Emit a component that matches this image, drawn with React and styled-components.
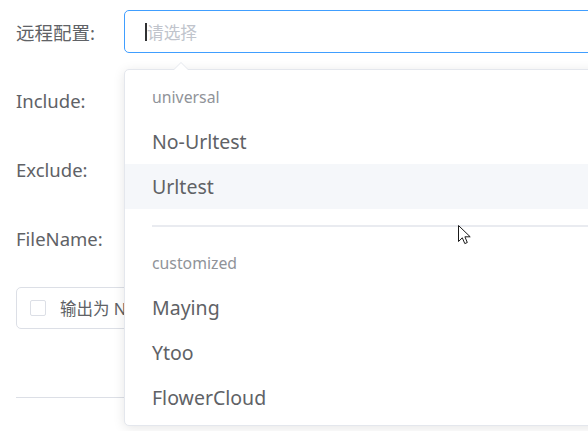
import React from "react";
import styled, { createGlobalStyle } from "styled-components";

const Global = createGlobalStyle`
  html, body { margin: 0; padding: 0; background: #fff; overflow: hidden; }
  body { width: 588px; height: 431px; font-family: "Noto Sans", "Noto Sans CJK SC", sans-serif; }
`;

const Page = styled.div`
  position: relative;
  width: 588px;
  height: 431px;
  overflow: hidden;
  padding: 10px 0 0 16px;
  box-sizing: border-box;
`;

const Row = styled.div`
  display: flex;
  align-items: center;
  height: 43px;
  margin-bottom: ${(p) => p.$gap}px;
`;

const Label = styled.div`
  width: 108px;
  flex: none;
  font-size: 18.5px;
  color: #606266;
`;

const InputBox = styled.div`
  flex: none;
  width: 600px;
  height: 43px;
  box-sizing: border-box;
  border: 1px solid ${(p) => (p.$focus ? "#409eff" : "#dcdfe6")};
  border-radius: 5px;
  display: flex;
  align-items: center;
  padding-left: 20px;
`;

const Caret = styled.span`
  width: 2px;
  height: 18px;
  background: #303133;
`;

const Placeholder = styled.span`
  font-size: 16.7px;
  color: #c0c4cc;
`;

const CheckRow = styled.div`
  display: flex;
  align-items: center;
  width: 600px;
  height: 42px;
  box-sizing: border-box;
  border: 1px solid #dcdfe6;
  border-radius: 5px;
  padding-left: 13px;
  margin-top: 27px;
`;

const Box = styled.span`
  width: 16px;
  height: 16px;
  box-sizing: border-box;
  border: 1px solid #dcdfe6;
  border-radius: 2px;
  margin-right: 14px;
`;

const CheckText = styled.span`
  font-size: 16.5px;
  color: #606266;
`;

const Divider = styled.div`
  width: 600px;
  height: 1px;
  background: #dcdfe6;
  margin-top: 68px;
`;

const Dropdown = styled.div`
  position: absolute;
  left: 124px;
  top: 69px;
  width: 600px;
  box-sizing: border-box;
  background: #fff;
  border: 1px solid #e4e7ed;
  border-radius: 5px;
  box-shadow: 0 2px 12px 0 rgba(0, 0, 0, 0.1);
  padding: 5px 0;
`;

const Arrow = styled.div`
  position: absolute;
  left: 48px;
  top: -8px;
  width: 0;
  height: 0;
  border-left: 8px solid transparent;
  border-right: 8px solid transparent;
  border-bottom: 8px solid #e4e7ed;
  &::after {
    content: "";
    position: absolute;
    left: -7px;
    top: 1px;
    border-left: 7px solid transparent;
    border-right: 7px solid transparent;
    border-bottom: 7px solid #fff;
  }
`;

const Group = styled.div`
  padding-bottom: ${(p) => (p.$last ? 0 : 18)}px;
  margin-bottom: ${(p) => (p.$last ? 0 : 14)}px;
  position: relative;
  ${(p) =>
    p.$last
      ? ""
      : `&::after {
    content: "";
    position: absolute;
    left: 27px;
    right: 0;
    bottom: 0;
    height: 2px;
    background: #e9ebf0;
  }`}
`;

const GroupTitle = styled.div`
  height: 44px;
  line-height: 44px;
  padding-left: 27px;
  font-size: 15.8px;
  color: #909399;
`;

const Item = styled.div`
  height: 45px;
  line-height: 45px;
  padding-left: 27px;
  font-size: 19.5px;
  color: #606266;
  background: ${(p) => (p.$hover ? "#f5f7fa" : "#fff")};
`;

const Pointer = styled.svg`
  position: absolute;
  left: 458px;
  top: 225px;
`;

const groups = [
  { title: "universal", items: ["No-Urltest", "Urltest"] },
  { title: "customized", items: ["Maying", "Ytoo", "FlowerCloud"] },
];

export default function App() {
  return (
    <>
      <Global />
      <Page>
        <Row $gap={26}>
          <Label>远程配置:</Label>
          <InputBox $focus>
            <Caret />
            <Placeholder>请选择</Placeholder>
          </InputBox>
        </Row>
        <Row $gap={26}>
          <Label>Include:</Label>
          <InputBox />
        </Row>
        <Row $gap={26}>
          <Label>Exclude:</Label>
          <InputBox />
        </Row>
        <Row $gap={0}>
          <Label>FileName:</Label>
          <InputBox />
        </Row>
        <CheckRow>
          <Box />
          <CheckText>输出为 Node List</CheckText>
        </CheckRow>
        <Divider />
        <Dropdown>
          <Arrow />
          {groups.map((g, gi) => (
            <Group key={g.title} $last={gi === groups.length - 1}>
              <GroupTitle>{g.title}</GroupTitle>
              {g.items.map((it) => (
                <Item key={it} $hover={it === "Urltest"}>
                  {it}
                </Item>
              ))}
            </Group>
          ))}
        </Dropdown>
        <Pointer width="14" height="22" viewBox="0 0 14 22">
          <path
            d="M0.5 0.5 L0.5 16.5 L4.3 12.8 L6.8 18.6 L9.3 17.5 L6.9 11.8 L12.2 11.8 Z"
            fill="#fff"
            stroke="#1a1a1a"
            strokeWidth="1"
            strokeLinejoin="miter"
          />
        </Pointer>
      </Page>
    </>
  );
}
